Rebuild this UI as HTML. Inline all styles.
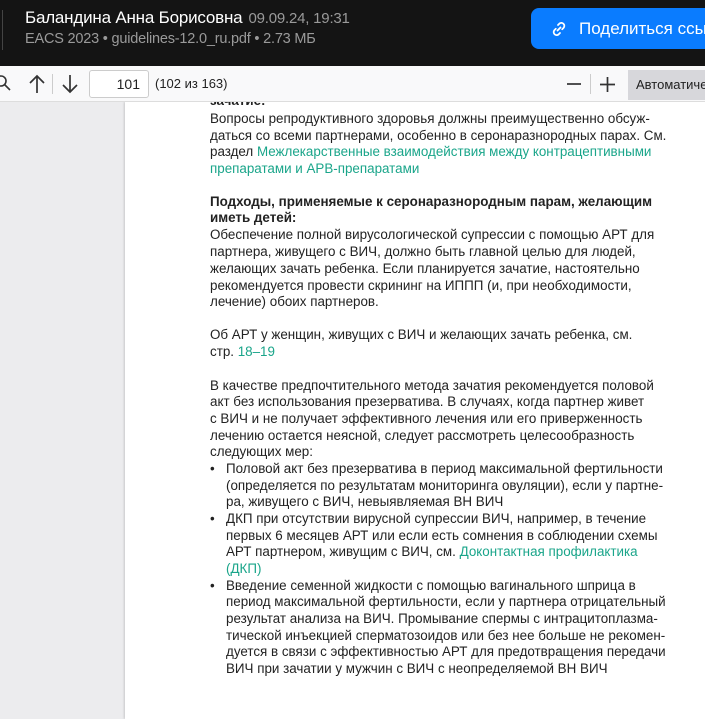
<!DOCTYPE html>
<html><head><meta charset="utf-8"><style>
*{margin:0;padding:0;box-sizing:border-box}
body{width:705px;height:719px;overflow:hidden;background:#ececee;font-family:"Liberation Sans",Arial,sans-serif;position:relative}
.top{position:absolute;left:0;top:0;width:705px;height:66px;background:#141414}
.sep{position:absolute;left:2px;top:10px;width:1px;height:40px;background:#444}
.name{position:absolute;left:25px;top:8px;color:#fff;font-size:17px;letter-spacing:-0.2px}
.date{color:#9a9a9a;font-size:15px;margin-left:6px}
.sub{position:absolute;left:25px;top:31px;color:#9a9a9a;font-size:14.5px;letter-spacing:-0.2px}
.btn{position:absolute;left:531px;top:8px;width:200px;height:41px;background:#0a7cff;border-radius:8px;color:#fff;font-size:17px;line-height:41px;padding-left:48px;white-space:nowrap;overflow:hidden}
.tb{position:absolute;left:0;top:66px;width:705px;height:36px;background:#f9f9fa;border-bottom:1px solid #ddd}
.inp{position:absolute;left:89px;top:70px;width:60px;height:28px;border:1px solid #ccc;border-radius:3px;background:#fff;font-size:14px;text-align:right;padding-right:8px;line-height:26px;color:#222}
.pg{position:absolute;left:155px;top:76px;font-size:13px;color:#222}
.auto{position:absolute;left:628px;top:70px;width:80px;height:30px;background:#d7d7db;font-size:13px;line-height:30px;padding-left:8px;color:#222;white-space:nowrap;overflow:hidden}
.page{position:absolute;left:125px;top:102px;width:600px;height:617px;background:#fff;box-shadow:-1px 0 2px rgba(0,0,0,.15)}
.l{position:absolute;left:210px;font-size:13.4px;color:#222;white-space:nowrap;line-height:17px}
.b{font-weight:bold}
.g{color:#1aa58a}
</style></head><body>
<div class="top"><div class="sep"></div>
<div class="name">Баландина Анна Борисовна<span class="date">09.09.24, 19:31</span></div>
<div class="sub">EACS 2023 • guidelines-12.0_ru.pdf • 2.73 МБ</div>
<div class="btn">Поделиться ссылкой
<svg style="position:absolute;left:18px;top:11px" width="20" height="20" viewBox="0 0 20 20" fill="none" stroke="#fff" stroke-width="1.8" stroke-linecap="round"><path d="M8.5 11.5l3-3M9 6l1.5-1.5a3 3 0 014.2 4.2L13.2 10.2M11 14l-1.5 1.5a3 3 0 01-4.2-4.2L6.8 9.8"/></svg></div>
</div>
<div class="page"></div>
<div class="l b" style="top:92px">зачатие:</div>
<div class="tb">
<svg style="position:absolute;left:-6px;top:8px" width="18" height="18" viewBox="0 0 18 18" fill="none" stroke="#333" stroke-width="1.6"><circle cx="7" cy="7" r="5"/><path d="M11 11l5 5"/></svg>
<svg style="position:absolute;left:27px;top:7px" width="20" height="22" viewBox="0 0 20 22" fill="none" stroke="#333" stroke-width="1.7"><path d="M10 20V3M3 10l7-7 7 7"/></svg>
<div style="position:absolute;left:52px;top:8px;width:1px;height:20px;background:#ccc"></div>
<svg style="position:absolute;left:60px;top:7px" width="20" height="22" viewBox="0 0 20 22" fill="none" stroke="#333" stroke-width="1.7"><path d="M10 2v17M3 12l7 7 7-7"/></svg>
<svg style="position:absolute;left:566px;top:10px" width="16" height="16" viewBox="0 0 16 16" stroke="#333" stroke-width="1.7"><path d="M1 8h14"/></svg>
<div style="position:absolute;left:590px;top:8px;width:1px;height:20px;background:#ccc"></div>
<svg style="position:absolute;left:599px;top:10px" width="17" height="17" viewBox="0 0 17 17" stroke="#333" stroke-width="1.7"><path d="M1 8.5h15M8.5 1v15"/></svg>
</div>
<div class="inp">101</div>
<div class="pg">(102 из 163)</div>
<div class="auto">Автоматически</div>

<div class="l" style="top:110px">Вопросы репродуктивного здоровья должны преимущественно обсуж-</div>
<div class="l" style="top:127px">даться со всеми партнерами, особенно в серонаразнородных парах. См.</div>
<div class="l" style="top:143px">раздел <span class="g">Межлекарственные взаимодействия между контрацептивными</span></div>
<div class="l g" style="top:160px">препаратами и АРВ-препаратами</div>
<div class="l b" style="top:193px">Подходы, применяемые к серонаразнородным парам, желающим</div>
<div class="l b" style="top:209px">иметь детей:</div>
<div class="l" style="top:226px">Обеспечение полной вирусологической супрессии с помощью АРТ для</div>
<div class="l" style="top:243px">партнера, живущего с ВИЧ, должно быть главной целью для людей,</div>
<div class="l" style="top:260px">желающих зачать ребенка. Если планируется зачатие, настоятельно</div>
<div class="l" style="top:277px">рекомендуется провести скрининг на ИППП (и, при необходимости,</div>
<div class="l" style="top:293px">лечение) обоих партнеров.</div>
<div class="l" style="top:326px">Об АРТ у женщин, живущих с ВИЧ и желающих зачать ребенка, см.</div>
<div class="l" style="top:343px">стр. <span class="g">18–19</span></div>
<div class="l" style="top:377px">В качестве предпочтительного метода зачатия рекомендуется половой</div>
<div class="l" style="top:393px">акт без использования презерватива. В случаях, когда партнер живет</div>
<div class="l" style="top:410px">с ВИЧ и не получает эффективного лечения или его приверженность</div>
<div class="l" style="top:427px">лечению остается неясной, следует рассмотреть целесообразность</div>
<div class="l" style="top:443px">следующих мер:</div>
<div class="l" style="top:460px">•</div>
<div class="l" style="top:460px;left:226px">Половой акт без презерватива в период максимальной фертильности</div>
<div class="l" style="top:477px;left:226px">(определяется по результатам мониторинга овуляции), если у партне-</div>
<div class="l" style="top:493px;left:226px">ра, живущего с ВИЧ, невыявляемая ВН ВИЧ</div>
<div class="l" style="top:510px">•</div>
<div class="l" style="top:510px;left:226px">ДКП при отсутствии вирусной супрессии ВИЧ, например, в течение</div>
<div class="l" style="top:527px;left:226px">первых 6 месяцев АРТ или если есть сомнения в соблюдении схемы</div>
<div class="l" style="top:543px;left:226px">АРТ партнером, живущим с ВИЧ, см. <span class="g">Доконтактная профилактика</span></div>
<div class="l g" style="top:560px;left:226px">(ДКП)</div>
<div class="l" style="top:577px">•</div>
<div class="l" style="top:577px;left:226px">Введение семенной жидкости с помощью вагинального шприца в</div>
<div class="l" style="top:593px;left:226px">период максимальной фертильности, если у партнера отрицательный</div>
<div class="l" style="top:610px;left:226px">результат анализа на ВИЧ. Промывание спермы с интрацитоплазма-</div>
<div class="l" style="top:627px;left:226px">тической инъекцией сперматозоидов или без нее больше не рекомен-</div>
<div class="l" style="top:643px;left:226px">дуется в связи с эффективностью АРТ для предотвращения передачи</div>
<div class="l" style="top:660px;left:226px">ВИЧ при зачатии у мужчин с ВИЧ с неопределяемой ВН ВИЧ</div>
</body></html>
